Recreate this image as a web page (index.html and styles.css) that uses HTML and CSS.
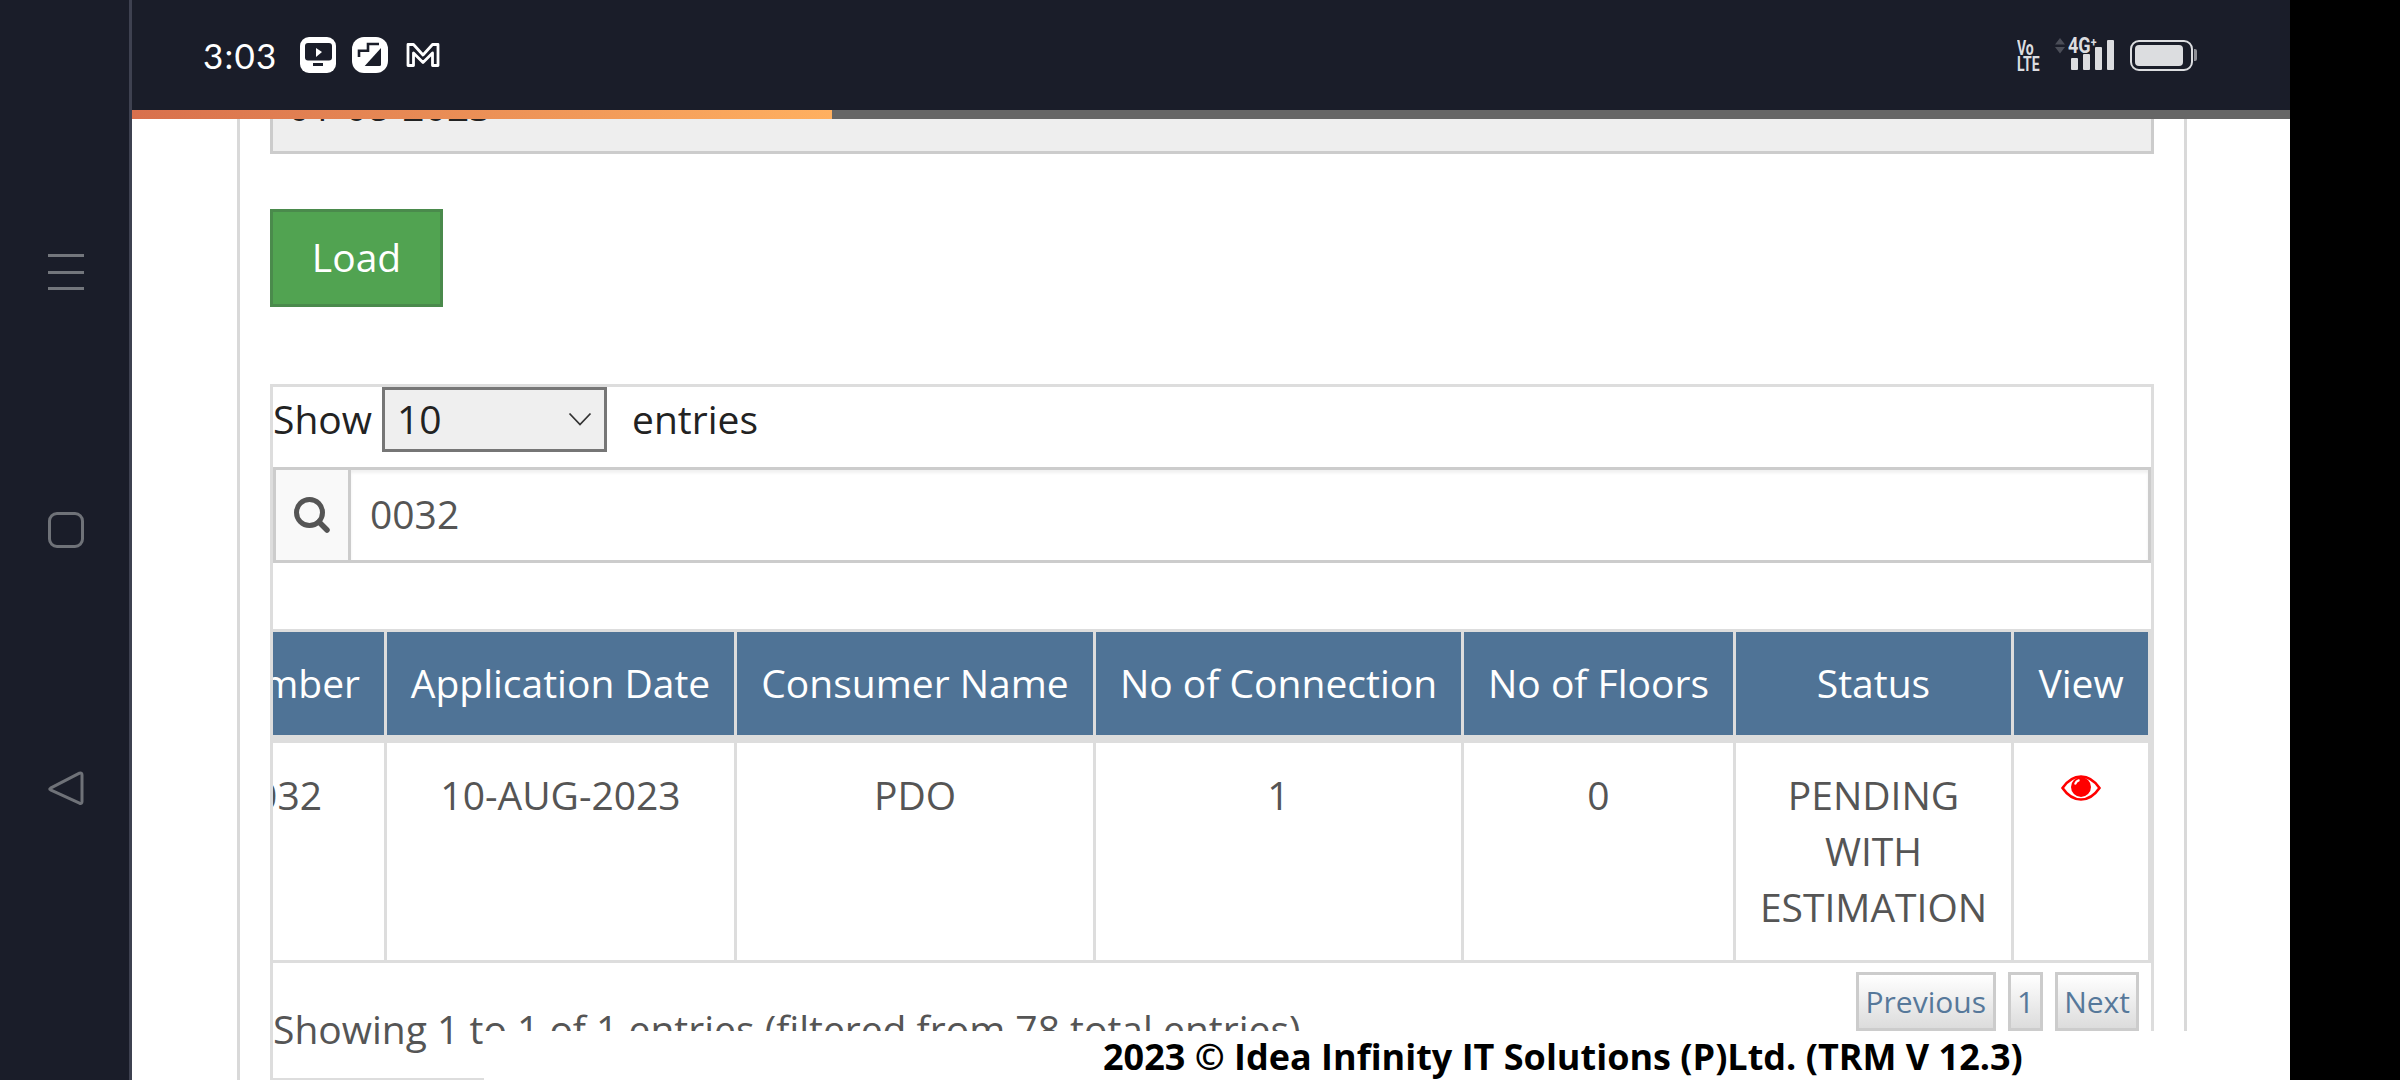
FILE: index.html
```html
<!DOCTYPE html>
<html lang="en">
<head>
<meta charset="utf-8">
<title>Applications</title>
<link rel="stylesheet" href="styles.css">
</head>
<body>
<div class="screen">
  <nav class="navstrip">
    <div class="navslot">
      <div class="hamburger"><span></span><span></span><span></span></div>
    </div>
    <div class="navslot"><div class="navsquare"></div></div>
    <div class="navslot">
      <svg class="navback" viewBox="0 0 36 36" width="36" height="36"><path d="M2.5 18.2 31.5 3.2Q34 2.4 34 5V31.5Q34 34 31.5 33.2L2.5 19.8Q1 19 2.5 18.2Z" fill="none" stroke="#6f7278" stroke-width="3" stroke-linejoin="round"/></svg>
    </div>
  </nav>
  <main class="app">
    <header class="statusbar">
      <div class="status-left">
        <span class="clock">3:03</span>
        <svg class="appicon" viewBox="0 0 36 36" width="36" height="36"><rect width="36" height="36" rx="9" fill="#fff"/><rect x="5" y="6" width="27" height="17.500" rx="3" fill="#1a1d29"/><path d="M16 11 22 15 16 20Z" fill="#fff"/><rect x="13" y="26" width="10" height="3" fill="#1a1d29"/></svg>
        <svg class="appicon" viewBox="0 0 36 36" width="36" height="36"><rect width="36" height="36" rx="12" fill="#fff"/><path d="M7 20V13.700H16V7H27" fill="none" stroke="#1a1d29" stroke-width="2.600"/><path d="M29 11V27.500Q29 29 27.500 29H12.700Z" fill="#1a1d29"/></svg>
        <svg class="mailicon" viewBox="0 0 34 26" width="34" height="26"><path d="M2 2.500H7.500L17 13 26.500 2.500H32V23.500H26.500V11L17 20.500 7.500 11V23.500H2Z" fill="none" stroke="#fff" stroke-width="2.800" stroke-linejoin="round"/></svg>
      </div>
      <div class="status-right">
        <div class="volte"><span>Vo</span><span>LTE</span></div>
        <div class="signal">
          <svg class="updown" viewBox="0 0 10 16" width="10" height="16"><path d="M5 0 10 6.500H0ZM5 15.500 0 9H10Z" fill="#4b4e58"/></svg>
          <span class="net">4G<sup>+</sup></span>
          <div class="bars"><i class="b1"></i><i class="b2"></i><i class="b3"></i><i class="b4"></i></div>
        </div>
        <div class="battery"><div class="battery-fill"></div></div>
        <div class="battery-tip"></div>
      </div>
    </header>
    <div class="progress"><div class="progress-fill"></div></div>
    <div class="viewport">
      <div class="panel">
        <div class="date-input">01-08-2023</div>
        <button class="load" type="button">Load</button>
        <section class="dt">
          <div class="length">
            <span>Show</span>
            <span class="select"><span>10</span><svg viewBox="0 0 24 14" width="24" height="14"><path d="M1.500 1.500 12 12.500 22.500 1.500" fill="none" stroke="#333" stroke-width="1.800"/></svg></span>
            <span class="entries">entries</span>
          </div>
          <div class="search">
            <div class="addon">
              <svg viewBox="0 0 36 36" width="36" height="36"><circle cx="15.500" cy="15.500" r="13" fill="none" stroke="#555" stroke-width="5"/><path d="M25 25 33 33" stroke="#555" stroke-width="5.500" stroke-linecap="round"/></svg>
            </div>
            <div class="search-field">0032</div>
          </div>
          <div class="tablewrap">
            <table class="grid">
              <colgroup>
                <col class="c0"><col class="c1"><col class="c2"><col class="c3"><col class="c4"><col class="c5"><col class="c6">
              </colgroup>
              <thead>
                <tr>
                  <th class="first">Application Number</th>
                  <th>Application Date</th>
                  <th>Consumer Name</th>
                  <th>No of Connection</th>
                  <th>No of Floors</th>
                  <th>Status</th>
                  <th>View</th>
                </tr>
              </thead>
              <tbody>
                <tr>
                  <td class="first num">0032</td>
                  <td>10-AUG-2023</td>
                  <td>PDO</td>
                  <td>1</td>
                  <td>0</td>
                  <td>PENDING WITH ESTIMATION</td>
                  <td class="view">
                    <svg viewBox="0 0 40 26" width="40" height="26"><path d="M1.500 13C7 5 13 1.500 20 1.500S33 5 38.500 13C33 21 27 24.500 20 24.500S7 21 1.500 13Z" fill="none" stroke="#f00" stroke-width="2.600"/><circle cx="20" cy="12" r="10" fill="#f00"/><path d="M14 9.500Q15 6 18.500 5" fill="none" stroke="#fff" stroke-width="2"/></svg>
                  </td>
                </tr>
              </tbody>
            </table>
          </div>
          <div class="dt-foot">
            <div class="info">Showing 1 to 1 of 1 entries (filtered from 78 total entries)</div>
            <div class="pager">
              <a class="page">Previous</a>
              <a class="page current">1</a>
              <a class="page next">Next</a>
            </div>
          </div>
        </section>
      </div>
      <footer class="copyright"><b>2023 © Idea Infinity IT Solutions (P)Ltd. (TRM V 12.3)</b></footer>
    </div>
  </main>
  <div class="blackbar"></div>
</div>
</body>
</html>
```
FILE: styles.css
```css
* { box-sizing: border-box; }
html, body { margin: 0; height: 100%; overflow: hidden; background: #000; }
body { font-family: "Open Sans", "Noto Sans", sans-serif; color: #555; }
.screen { display: flex; width: 2400px; height: 1080px; }

.navstrip { width: 132px; flex: none; background: #1a1d29; border-right: 3px solid #3e4150; display: flex; flex-direction: column; padding-top: 254px; gap: 222px; padding-left: 48px; }
.navslot { width: 36px; height: 36px; }
.hamburger { display: flex; flex-direction: column; justify-content: space-between; height: 36px; }
.hamburger span { display: block; height: 3px; background: #73767c; }
.navsquare { width: 36px; height: 36px; border: 3px solid #6f7278; border-radius: 9px; }
.navback { display: block; }

.app { width: 2158px; flex: none; display: flex; flex-direction: column; background: #fff; }
.statusbar { height: 110px; flex: none; background: #1a1d29; display: flex; justify-content: space-between; padding: 37px 93px 0 71px; color: #fff; }
.status-left { display: flex; align-items: flex-start; height: 36px; }
.clock { font-family: "Lato", sans-serif; font-size: 35px; letter-spacing: 1.200px; line-height: 36px; width: 97px; }
.appicon { margin-right: 16px; }
.mailicon { margin-top: 5px; margin-left: 2px; }
.status-right { display: flex; align-items: flex-start; color: #dcdde0; }
.volte { display: flex; flex-direction: column; width: 38px; margin-top: 3px; font-family: "Roboto", sans-serif; font-weight: 700; font-size: 20px; line-height: 16px; }
.volte span { display: block; transform: scaleX(.7); transform-origin: left; white-space: nowrap; }
.signal { position: relative; width: 59px; height: 33px; }
.updown { position: absolute; left: 0; top: 1px; }
.net { position: absolute; left: 13px; top: 0; font-family: "Roboto", sans-serif; font-weight: 700; font-size: 22px; line-height: 18px; transform: scaleX(.82); transform-origin: left; white-space: nowrap; }
.net sup { font-size: 13px; line-height: 0; vertical-align: 6px; }
.bars { position: absolute; left: 16px; bottom: 0; display: flex; align-items: flex-end; gap: 5px; }
.bars i { display: block; width: 7px; background: #dcdde0; border-radius: 1px; }
.b1 { height: 12px; } .b2 { height: 16px; } .b3 { height: 23px; } .b4 { height: 30px; }
.battery { margin-left: 16px; margin-top: 3px; width: 63px; height: 31px; border: 2px solid #dcdde0; border-radius: 9px; padding: 3px; }
.battery-fill { width: 48px; height: 21px; background: #dcdde0; border-radius: 4px; }
.battery-tip { width: 3px; height: 12px; margin: 12px 0 0 1px; background: #8f9096; border-radius: 0 2px 2px 0; }

.progress { height: 9px; flex: none; background: #666; }
.progress-fill { width: 700px; height: 9px; background: linear-gradient(90deg, #d8704d, #ffb060); }

.viewport { position: relative; flex: 1; overflow: hidden; }
.panel { width: 1950px; margin-left: 105px; border: solid #d9d9d9; border-width: 0 3px; padding: 0 30px; height: 1200px; margin-top: -40px; }

.date-input { height: 75px; background: #eee; border: 3px solid #ccc; border-top: 0; padding: 7px 0 0 15px; font-size: 39px; line-height: 40px; color: #222; }
.load { display: block; margin-top: 55px; width: 173px; height: 98px; background: #51a351; border: 3px solid #4a8a4c; color: #fff; font: 39px/1 "Open Sans", sans-serif; padding: 0 0 3px; }

.dt { margin-top: 77px; border: 3px solid #ddd; height: 697px; color: #222; font-size: 39px; }
.length { height: 80px; display: flex; align-items: flex-start; line-height: 63px; color: #222; }
.length > span:first-child { margin-left: 0; width: 109px; }
.select { width: 225px; height: 65px; display: flex; align-items: center; justify-content: space-between; background: #efefef; border: 3px solid #767676; padding: 0 12px 2px 12px; line-height: 1; }
.entries { margin-left: 25px; }
.search { display: flex; height: 96px; border: 3px solid #ccc; }
.addon { width: 75px; flex: none; background: #f9f9f9; border-right: 3px solid #ccc; display: flex; align-items: center; justify-content: center; }
.search-field { flex: 1; padding-left: 19px; font-size: 39px; line-height: 88px; color: #555; box-shadow: inset 0 3px 3px rgba(0,0,0,.06); }

.tablewrap { margin-top: 66px; overflow: hidden; height: 334px; }
.grid { border-collapse: collapse; table-layout: fixed; width: 2286px; margin-left: -411px; font-size: 39px; text-align: center; }
.c0 { width: 522px; } .c1 { width: 350px; } .c2 { width: 359px; } .c3 { width: 368px; } .c4 { width: 272px; } .c5 { width: 278px; } .c6 { width: 137px; }
.grid th { height: 108px; background: #4f7396; color: #fff; font-weight: 400; border: 3px solid #ddd; padding: 0; border-bottom-width: 8px; line-height: 52px; }
.grid td { height: 223px; vertical-align: top; color: #555; border: 3px solid #ddd; padding: 24px 16px 0; line-height: 56px; }
.grid .first { text-align: right; padding-right: 24px; }
.grid .num { padding-right: 62px; }
.grid .view { padding: 32px 0 0; }
.view svg { display: block; margin: 0 auto; }

.dt-foot { position: relative; height: 115px; }
.info { padding-top: 40px; line-height: 52px; color: #555; white-space: nowrap; }
.pager { position: absolute; top: 9px; right: 12px; display: flex; gap: 12px; }
.page { display: block; height: 59px; padding: 0 7px; border: 3px solid #ccc; background: linear-gradient(#fff, #dcdcdc); font-size: 30px; line-height: 54px; color: #56789a; }
.page.current { padding: 0 6px; }
.page.next { padding: 0 6px; }

.copyright { position: absolute; left: 352px; right: 0; top: 912px; height: 60px; background: #fff; color: #000; font-size: 36px; line-height: 44px; padding: 4px 0 0 619px; }
.blackbar { flex: 1; background: #000; }
```
